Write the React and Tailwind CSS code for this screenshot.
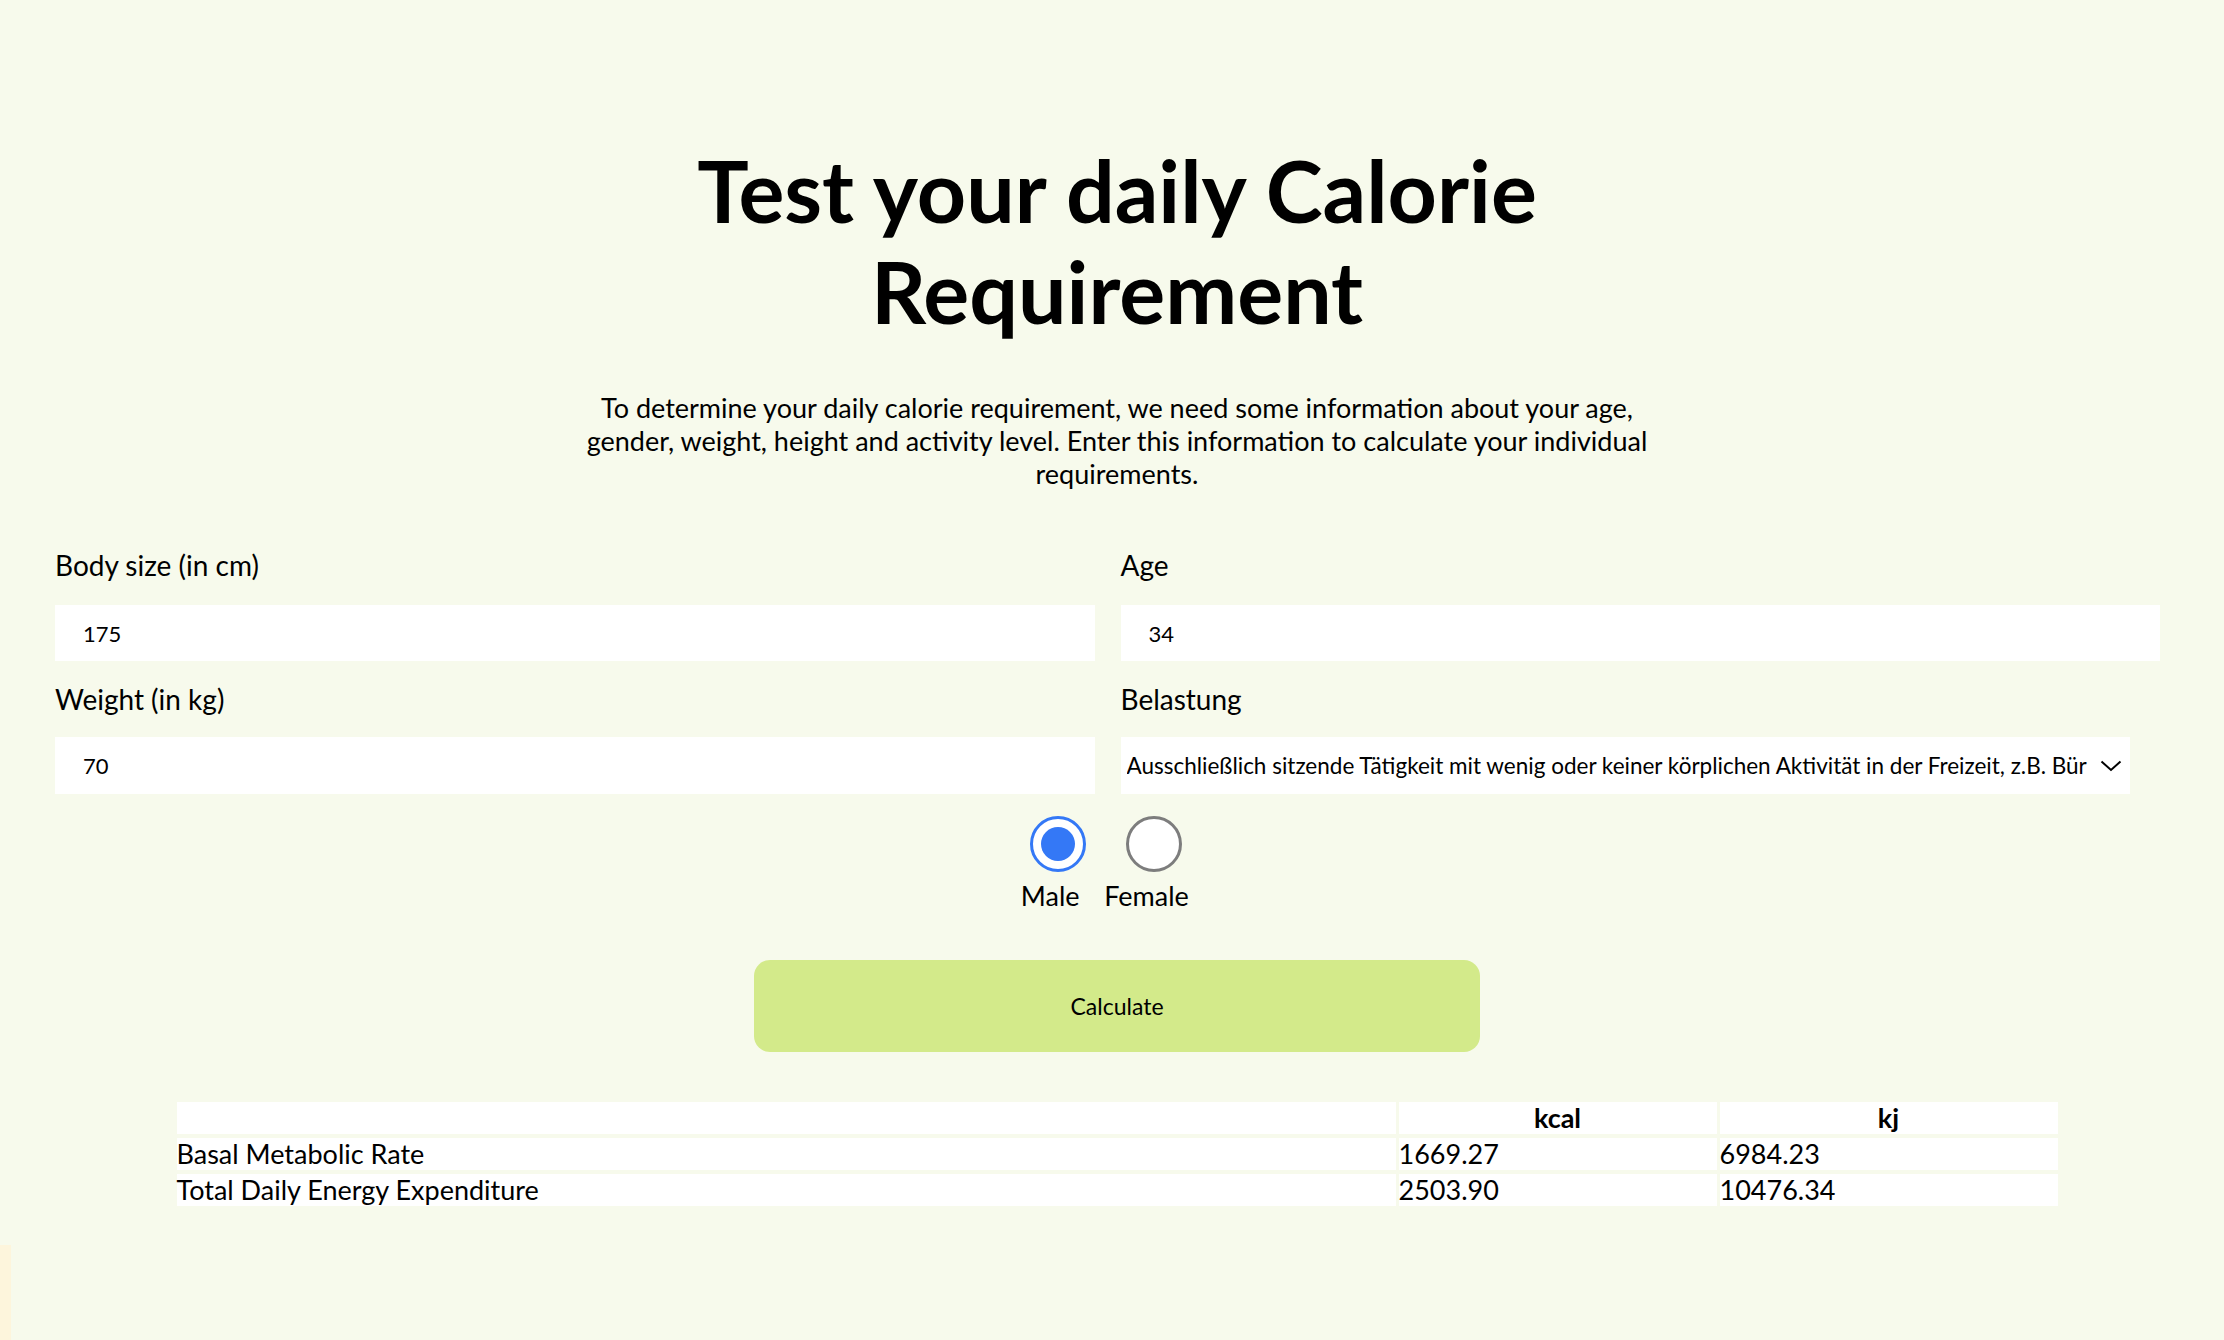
import React, { useState } from 'react';

const rows = [
    { label: 'Basal Metabolic Rate', kcal: '1669.27', kj: '6984.23' },
    { label: 'Total Daily Energy Expenditure', kcal: '2503.90', kj: '10476.34' },
];

export default function App() {
    const [gender, setGender] = useState('male');

    return (
        <div className="min-h-screen bg-[#f7faec] text-black font-['Lato',sans-serif]">
            <div className="pl-[10px] pt-[139px]">
                <h1 className="text-center text-[86px] font-bold leading-[101px]">
                    Test your daily Calorie<br />Requirement
                </h1>
                <p className="mx-auto mt-[50px] max-w-[1120px] text-center text-[27px] leading-[33px]">
                    To determine your daily calorie requirement, we need some information about your age,<br />
                    gender, weight, height and activity level. Enter this information to calculate your individual<br />
                    requirements.
                </p>
            </div>

            <div className="mt-[57px] grid grid-cols-2 gap-x-[26px] pl-[55px] pr-[64px]">
                <div className="flex flex-col">
                    <label className="text-[28px] leading-[36px]">Body size (in cm)</label>
                    <input
                        defaultValue="175"
                        className="mt-[22px] h-[56px] bg-white pl-[28px] text-[22px] outline-none"
                    />
                    <label className="mt-[20px] text-[28px] leading-[36px]">Weight (in kg)</label>
                    <input
                        defaultValue="70"
                        className="mt-[20px] h-[57px] bg-white pl-[28px] text-[22px] outline-none"
                    />
                </div>
                <div className="flex flex-col">
                    <label className="text-[28px] leading-[36px]">Age</label>
                    <input
                        defaultValue="34"
                        className="mt-[22px] h-[56px] bg-white pl-[28px] text-[22px] outline-none"
                    />
                    <label className="mt-[20px] text-[28px] leading-[36px]">Belastung</label>
                    <div className="mt-[20px] flex h-[57px] w-[1009px] items-center bg-white pl-[6px] pr-[8px] text-[22.5px]">
                        <span className="flex-1 overflow-hidden whitespace-nowrap">
                            Ausschließlich sitzende Tätigkeit mit wenig oder keiner körplichen Aktivität in der Freizeit, z.B. Bür
                        </span>
                        <svg width="22" height="12" viewBox="0 0 22 12" className="ml-[6px] shrink-0">
                            <path d="M1.5 1.5 L11 10 L20.5 1.5" fill="none" stroke="black" strokeWidth="2" />
                        </svg>
                    </div>
                </div>
            </div>

            <div className="mt-[22px] flex justify-center gap-[18px] pl-[55px] pr-[76px]">
                {[
                    { id: 'male', label: 'Male' },
                    { id: 'female', label: 'Female' },
                ].map((g) => (
                    <button
                        key={g.id}
                        onClick={() => setGender(g.id)}
                        className="flex flex-col items-center"
                    >
                        {gender === g.id ? (
                            <span className="ml-[16px] flex h-[56px] w-[56px] items-center justify-center rounded-full border-[3px] border-[#3478f6] bg-white">
                                <span className="h-[34px] w-[34px] rounded-full bg-[#3478f6]" />
                            </span>
                        ) : (
                            <span className="ml-[16px] h-[56px] w-[56px] rounded-full border-[3px] border-[#7d7d7d] bg-white" />
                        )}
                        <span className="mt-[8px] text-[27px] leading-[32px]">{g.label}</span>
                    </button>
                ))}
            </div>

            <div className="pl-[10px]">
                <div className="mt-[48px] flex justify-center">
                    <button className="h-[92px] w-[726px] rounded-[16px] bg-[#d3ea8a] text-[23px]">
                        Calculate
                    </button>
                </div>

                <div className="mx-auto mt-[50px] grid w-[1881px] grid-cols-[1219px_318px_338px] gap-x-[3px] gap-y-[4px] text-[27px] leading-[32px]">
                    <div className="bg-white" />
                    <div className="bg-white text-center font-bold">kcal</div>
                    <div className="bg-white text-center font-bold">kj</div>
                    {rows.map((r) => (
                        <React.Fragment key={r.label}>
                            <div className="bg-white">{r.label}</div>
                            <div className="bg-white">{r.kcal}</div>
                            <div className="bg-white">{r.kj}</div>
                        </React.Fragment>
                    ))}
                </div>
            </div>

            <div className="fixed bottom-0 left-0 h-[95px] w-[11px] bg-[#fdf5dc]" />
        </div>
    );
}
